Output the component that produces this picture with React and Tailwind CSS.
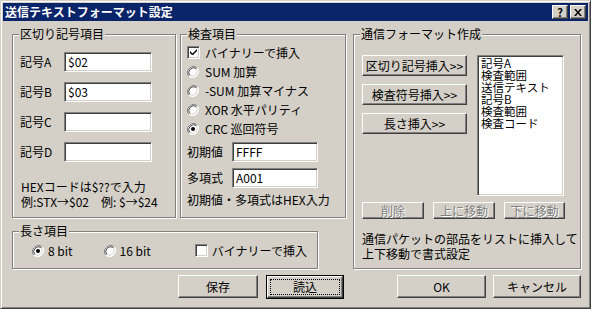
import React from "react";

const FONT = "font-['Noto_Sans_CJK_JP','Noto_Sans',sans-serif] text-[12px] leading-none text-black";
const RAISED =
  "border border-t-white border-l-white border-r-[#404040] border-b-[#404040] shadow-[inset_-1px_-1px_0_#808080] bg-[#d4d0c8]";
const SUNKEN =
  "border border-t-[#808080] border-l-[#808080] border-r-white border-b-white shadow-[inset_1px_1px_0_#404040,inset_-1px_-1px_0_#d4d0c8]";

function Group({ title, className, children }) {
  return (
    <div
      className={`relative border border-[#808080] shadow-[inset_1px_1px_0_#fff,1px_1px_0_#fff] ${className}`}
    >
      <span className="absolute left-[6px] -top-[7px] bg-[#d4d0c8] px-[1px] leading-[12px]">
        {title}
      </span>
      {children}
    </div>
  );
}

function Field({ value, className = "" }) {
  return (
    <div className={`flex h-[20px] items-center bg-white pl-[3px] ${SUNKEN} ${className}`}>
      {value}
    </div>
  );
}

function Check({ checked }) {
  return (
    <div className={`flex h-[13px] w-[13px] shrink-0 items-center justify-center bg-white ${SUNKEN}`}>
      {checked && (
        <svg width="7" height="7" viewBox="0 0 7 7">
          <path d="M0 2v2l2 2h1l4-4V0L2.5 4.5z" fill="#000" />
        </svg>
      )}
    </div>
  );
}

function Radio({ checked }) {
  return (
    <svg width="12" height="12" viewBox="0 0 12 12" className="shrink-0">
      <circle cx="6" cy="6" r="5.5" fill="#fff" />
      <path d="M10.2 1.8A6 6 0 0 0 1.8 10.2" stroke="#808080" strokeWidth="1" fill="none" />
      <path d="M9.4 2.6A4.9 4.9 0 0 0 2.6 9.4" stroke="#404040" strokeWidth="1" fill="none" />
      <path d="M10.2 1.8A6 6 0 0 1 1.8 10.2" stroke="#fff" strokeWidth="1" fill="none" />
      <path d="M9.4 2.6A4.9 4.9 0 0 1 2.6 9.4" stroke="#d4d0c8" strokeWidth="1" fill="none" />
      {checked && <circle cx="6" cy="6" r="2" fill="#000" />}
    </svg>
  );
}

function Button({ children, className = "", disabled, focused }) {
  if (focused) {
    return (
      <div className={`border border-black ${className}`}>
        <div className={`flex h-full items-center justify-center ${RAISED}`}>
          <div className="flex h-[calc(100%-4px)] w-[calc(100%-4px)] items-center justify-center border border-dotted border-black">
            {children}
          </div>
        </div>
      </div>
    );
  }
  return (
    <div
      className={`flex items-center justify-center ${RAISED} ${
        disabled ? "text-[#808080] [text-shadow:1px_1px_0_#fff]" : ""
      } ${className}`}
    >
      {children}
    </div>
  );
}

export default function App() {
  const listItems = ["記号A", "検査範囲", "送信テキスト", "記号B", "検査範囲", "検査コード"];

  return (
    <div
      className={`${FONT} h-[309px] w-[591px] border border-t-[#d4d0c8] border-l-[#d4d0c8] border-r-[#404040] border-b-[#404040] bg-[#d4d0c8] p-[2px] shadow-[inset_1px_1px_0_#fff,inset_-1px_-1px_0_#808080]`}
    >
      {/* title bar */}
      <div className="flex h-[18px] items-center justify-between bg-[#0a246a] pl-[2px] pr-[2px]">
        <span className="font-bold text-white">送信テキストフォーマット設定</span>
        <div className="flex gap-[2px]">
          <div className={`flex h-[14px] w-[16px] items-center justify-center text-[11px] font-bold ${RAISED}`}>
            ?
          </div>
          <div className={`flex h-[14px] w-[16px] items-center justify-center ${RAISED}`}>
            <svg width="8" height="7" viewBox="0 0 8 7">
              <path d="M0 0h2l2 2.5L6 0h2L5 3.5 8 7H6L4 4.5 2 7H0l3-3.5z" fill="#000" />
            </svg>
          </div>
        </div>
      </div>

      {/* body */}
      <div className="mt-[13px] flex h-[235px] items-start pl-[9px]">
        <div className="flex flex-col">
          <div className="flex gap-[4px]">
            <Group title="区切り記号項目" className="h-[184px] w-[164px]">
              <div className="flex flex-col gap-[10px] pt-[17px]">
                {[
                  ["記号A", "$02"],
                  ["記号B", "$03"],
                  ["記号C", ""],
                  ["記号D", ""],
                ].map(([label, val]) => (
                  <div key={label} className="flex items-center pl-[7px]">
                    <span className="w-[44px]">{label}</span>
                    <Field value={val} className="w-[88px]" />
                  </div>
                ))}
              </div>
              <div className="mt-[17px] pl-[8px] leading-[15px]">
                <div>HEXコードは$??で入力</div>
                <div>例:STX→$02　例: $→$24</div>
              </div>
            </Group>

            <Group title="検査項目" className="h-[184px] w-[166px]">
              <div className="flex flex-col pl-[6px] pt-[8px]">
                <div className="flex h-[19px] items-center gap-[5px]">
                  <Check checked />
                  <span>バイナリーで挿入</span>
                </div>
                {[
                  ["SUM 加算", false],
                  ["-SUM 加算マイナス", false],
                  ["XOR 水平パリティ", false],
                  ["CRC 巡回符号", true],
                ].map(([label, on]) => (
                  <div key={label} className="flex h-[19px] items-center gap-[6px]">
                    <Radio checked={on} />
                    <span>{label}</span>
                  </div>
                ))}
                <div className="mt-[4px] flex items-center">
                  <span className="w-[45px]">初期値</span>
                  <Field value="FFFF" className="w-[86px]" />
                </div>
                <div className="mt-[6px] flex items-center">
                  <span className="w-[45px]">多項式</span>
                  <Field value="A001" className="w-[86px]" />
                </div>
                <div className="mt-[5px] leading-[14px]">初期値・多項式はHEX入力</div>
              </div>
            </Group>
          </div>

          <Group title="長さ項目" className="mt-[13px] h-[38px] w-[306px]">
            <div className="flex items-center pt-[12px]">
              <div className="ml-[19px] flex items-center gap-[4px]">
                <Radio checked />
                <span>8 bit</span>
              </div>
              <div className="ml-[31px] flex items-center gap-[4px]">
                <Radio />
                <span>16 bit</span>
              </div>
              <div className="ml-[44px] flex items-center gap-[4px]">
                <Check />
                <span>バイナリーで挿入</span>
              </div>
            </div>
          </Group>
        </div>

        <Group title="通信フォーマット作成" className="ml-[7px] h-[235px] w-[228px]">
          <div className="flex gap-[10px] pl-[8px] pt-[20px]">
            <div className="flex flex-col gap-[8px]">
              <Button className="h-[21px] w-[105px]">区切り記号挿入&gt;&gt;</Button>
              <Button className="h-[21px] w-[105px]">検査符号挿入&gt;&gt;</Button>
              <Button className="h-[21px] w-[105px]">長さ挿入&gt;&gt;</Button>
            </div>
            <div className={`h-[141px] w-[87px] bg-white pl-[3px] pt-[1px] text-[11.5px] leading-[12px] ${SUNKEN}`}>
              {listItems.map((item, i) => (
                <div key={i} className="h-[12px]">{item}</div>
              ))}
            </div>
          </div>
          <div className="mt-[6px] flex gap-[9px] pl-[8px]">
            <Button disabled className="h-[17px] w-[62px]">削除</Button>
            <Button disabled className="h-[17px] w-[62px]">上に移動</Button>
            <Button disabled className="h-[17px] w-[61px]">下に移動</Button>
          </div>
          <div className="mt-[12px] pl-[8px] leading-[15px]">
            <div>通信パケットの部品をリストに挿入して</div>
            <div>上下移動で書式設定</div>
          </div>
        </Group>
      </div>

      {/* dialog buttons */}
      <div className="mt-[6px] flex pl-[175px]">
        <Button className="h-[23px] w-[80px]">保存</Button>
        <Button focused className="ml-[8px] h-[24px] w-[78px]">読込</Button>
        <Button className="ml-[53px] h-[23px] w-[89px]">OK</Button>
        <Button className="ml-[7px] h-[23px] w-[88px]">キャンセル</Button>
      </div>
    </div>
  );
}
